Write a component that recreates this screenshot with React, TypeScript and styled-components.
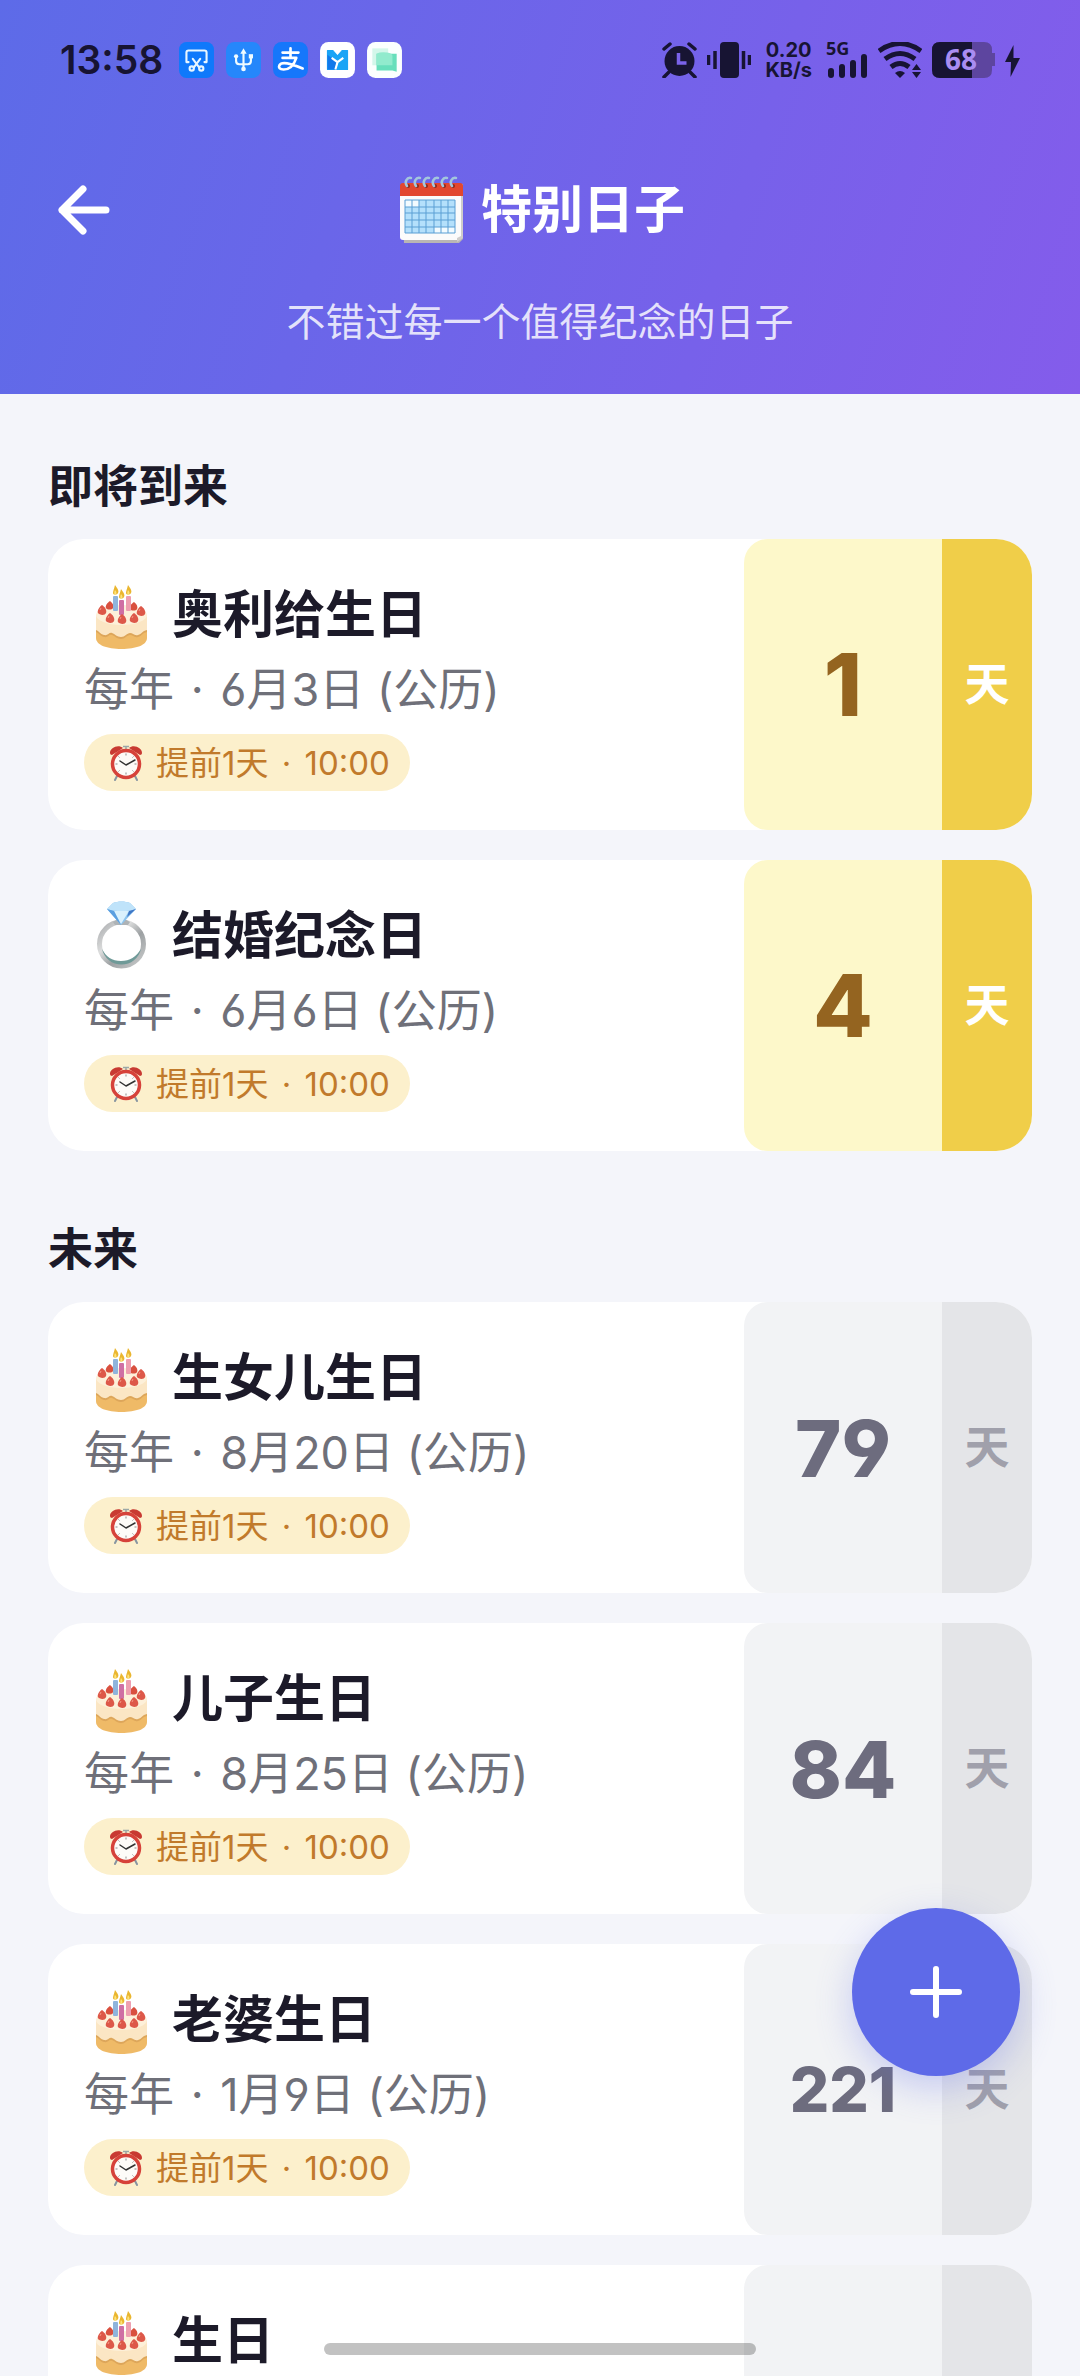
import React from "react";
import styled, { createGlobalStyle } from "styled-components";

const FONT = `Inter, "Noto Sans CJK SC", sans-serif`;
const STATUS_FONT = `"Noto Sans", sans-serif`;
const INK = "#171433";

type Tone = "soon" | "later";

const tones = {
  soon: { cell: "#fdf8ca", unit: "#f0ce49", number: "#946420", label: "#ffffff" },
  later: { cell: "#f2f3f5", unit: "#e4e5e8", number: "#6d6c7e", label: "#a0a0ab" },
};

const GlobalStyle = createGlobalStyle`
  *, *::before, *::after { box-sizing: border-box; }
  body {
    margin: 0;
    background: #f4f5fa;
    font-family: ${FONT};
    font-feature-settings: "cv03", "cv04";
    color: #1c1a29;
  }
  h1, h2, h3, p, ul { margin: 0; padding: 0; }
  ul { list-style: none; }
  button { border: 0; padding: 0; font: inherit; cursor: pointer; }
  svg { display: block; flex: none; }
`;

const Screen = styled.div`
  display: flex;
  flex-direction: column;
  height: 100vh;
  overflow: hidden;
`;

const Header = styled.header`
  flex: none;
  padding-bottom: 50px;
  background: linear-gradient(108deg, #5d6be8 0%, #845ceb 100%);
  color: #fff;
`;

const StatusBar = styled.div`
  display: flex;
  align-items: center;
  justify-content: space-between;
  height: 120px;
  padding: 0 60px;
  color: ${INK};
`;

const StatusGroup = styled.div<{ $gap: number }>`
  display: flex;
  align-items: center;
  gap: ${(p) => p.$gap}px;
`;

const Time = styled.time`
  margin-right: 4px;
  font-size: 39px;
  line-height: 48px;
  font-weight: 600;
`;

const Speed = styled.div`
  display: flex;
  flex-direction: column;
  align-items: center;
  margin: 0 4px;
  font-size: 20px;
  line-height: 20px;
  font-weight: 700;
`;

const NavBar = styled.div`
  display: grid;
  grid-template-columns: 1fr auto 1fr;
  align-items: center;
  height: 180px;
  padding: 0 48px;
`;

const BackButton = styled.button`
  display: grid;
  place-items: center;
  width: 72px;
  height: 72px;
  background: none;
  color: #fff;
`;

const PageTitle = styled.h1`
  display: flex;
  align-items: center;
  gap: 14px;
  font-size: 51px;
  line-height: 76px;
  font-weight: 700;
`;

const Tagline = styled.p`
  font-size: 39px;
  line-height: 44px;
  text-align: center;
  color: rgba(255, 255, 255, 0.82);
`;

const Content = styled.main`
  flex: 1;
  display: flex;
  flex-direction: column;
  gap: 69px;
  min-height: 0;
  overflow-y: auto;
  scrollbar-width: none;
  padding: 63px 48px 0;
`;

const SectionTitle = styled.h2`
  margin-bottom: 22px;
  font-size: 45px;
  line-height: 60px;
  font-weight: 700;
`;

const List = styled.ul`
  display: flex;
  flex-direction: column;
  gap: 30px;
`;

const Card = styled.li`
  display: flex;
  overflow: hidden;
  border-radius: 36px;
  background: #fff;
`;

const CardBody = styled.div`
  flex: 1;
  display: flex;
  flex-direction: column;
  align-items: flex-start;
  min-width: 0;
  padding: 39px 36px;
`;

const CardTitle = styled.h3`
  display: flex;
  align-items: center;
  gap: 16px;
  font-size: 51px;
  line-height: 74px;
  font-weight: 600;
`;

const CardDate = styled.p`
  margin-bottom: 7px;
  font-size: 45px;
  line-height: 75px;
  color: #6f7079;
  white-space: nowrap;
`;

const Dot = styled.span`
  margin: 0 4px;
`;

const Reminder = styled.div`
  display: flex;
  align-items: center;
  gap: 12px;
  height: 57px;
  padding: 0 20px 0 24px;
  border-radius: 29px;
  background: #fcf0cc;
  color: #c17a2b;
  font-size: 33px;
  line-height: 48px;
  white-space: nowrap;
`;

const DaysCell = styled.div<{ $tone: Tone; $digits: number }>`
  display: flex;
  align-items: center;
  justify-content: center;
  width: 198px;
  border-radius: 24px 0 0 24px;
  background: ${(p) => tones[p.$tone].cell};
  color: ${(p) => tones[p.$tone].number};
  font-size: ${(p) => (p.$digits > 2 ? 62 : p.$digits > 1 ? 79 : 87)}px;
  line-height: 96px;
  font-weight: 800;
`;

const UnitCell = styled.div<{ $tone: Tone }>`
  display: flex;
  align-items: center;
  justify-content: center;
  width: 90px;
  background: ${(p) => tones[p.$tone].unit};
  color: ${(p) => tones[p.$tone].label};
  font-size: 45px;
  line-height: 60px;
  font-weight: 700;
`;

const AddButton = styled.button`
  position: fixed;
  right: 60px;
  bottom: 300px;
  display: grid;
  place-items: center;
  width: 168px;
  height: 168px;
  border-radius: 50%;
  background: #5e6ae8;
  color: #fff;
  box-shadow: 0 12px 36px rgba(94, 106, 232, 0.3);
`;

const HomeIndicator = styled.div`
  position: fixed;
  bottom: 21px;
  left: 30%;
  width: 40%;
  height: 12px;
  border-radius: 6px;
  background: rgba(0, 0, 0, 0.24);
`;

function CakeIcon() {
  const berries = [[26, 26], [50, 27], [18, 31], [57, 32], [26, 39], [38, 40], [50, 39]];
  const candles: [number, number, string][] = [[29, 17, "#8fb4dc"], [42, 17, "#ee9fb0"], [35, 21, "#cf6fa4"]];
  return (
    <svg width="72" height="72" viewBox="0 0 72 72" aria-hidden="true">
      <path d="M12 36v23c0 7 11 11 25.500 11S63 66 63 59V36z" fill="#efba67" />
      <path d="M12 36v17c3 1 4 4 8 5s5-3 8-2 5 4 9 4 6-4 9-4 4 3 8 2 4-4 9-5V36z" fill="#dda65a" />
      <path d="M12 36v15c3 1 4 4 8 5s5-3 8-2 5 4 9 4 6-4 9-4 4 3 8 2 4-4 9-5V36z" fill="#fbe6c4" />
      <ellipse cx="37.500" cy="36" rx="25.500" ry="10" fill="#fdf0d9" />
      {berries.slice(0, 2).map(([x, y]) => (
        <path key={x} d={`M${x} ${y - 4}c3 2 4 5 3 7s-6 2-7 0 1-5 4-7z`} fill="#d9503f" />
      ))}
      {candles.map(([x, y, c]) => (
        <g key={x}>
          <rect x={x} y={y} width="5" height="15" rx="1" fill={c} />
          <path d={`M${x + 2} ${y - 11}c3 4 4 6 3 8s-5 2-5 0 1-4 2-8z`} fill="#eab62f" />
          <path d={`M${x + 2} ${y - 6}c2 2 2 4 0 5-1-1-1-3 0-5z`} fill="#fbe27a" />
        </g>
      ))}
      {berries.slice(2).map(([x, y]) => (
        <g key={`${x}-${y}`}>
          <path d={`M${x} ${y - 5}c3 2 5 5 4 8s-7 2-8 0 1-6 4-8z`} fill="#dd5849" />
          <path d={`M${x - 2} ${y}l1-2`} stroke="#f39a86" strokeWidth="1" />
        </g>
      ))}
    </svg>
  );
}

function RingIcon() {
  return (
    <svg width="72" height="72" viewBox="0 0 72 72" aria-hidden="true">
      <defs>
        <linearGradient id="band" x1="0" y1="0" x2="1" y2="1">
          <stop offset="0" stopColor="#a9abad" />
          <stop offset="0.350" stopColor="#dcdddd" />
          <stop offset="0.600" stopColor="#9da1a3" />
          <stop offset="1" stopColor="#c9cbcb" />
        </linearGradient>
      </defs>
      <circle cx="37.500" cy="44" r="22" fill="none" stroke="url(#band)" strokeWidth="5" />
      <path d="M18 49a20 20 0 0 0 39 0c-5 8-11 12-20 12s-15-4-19-12z" fill="#6f9a98" />
      <path d="M29 22l8-5 9 5-2 3H31z" fill="#aeb3b6" />
      <path d="M23 9l6-6c5-2 12-2 17 0l6 6-15 16z" fill="#8cc4ef" />
      <path d="M23 9l6-6c5-2 12-2 17 0l6 6c-8 3-21 3-29 0z" fill="#bfe3fa" />
      <path d="M30 11l7 13 8-13z" fill="#daf1fd" />
      <path d="M23 9l7 2 7 14z" fill="#5b9fe0" />
      <path d="M52 9l-7 2-2 6z" fill="#3f77c6" />
    </svg>
  );
}

function CalendarIcon() {
  const columns = [17, 24, 31, 39, 46, 53];
  const rows = [33, 39, 46, 53];
  return (
    <svg width="72" height="72" viewBox="0 0 72 72" aria-hidden="true">
      <path d="M7 10h61v55l-4 4H9z" fill="#b9b6b4" />
      <path d="M5 20h61v43a3 3 0 0 1-3 3H8a3 3 0 0 1-3-3z" fill="#fbfbfb" />
      <path d="M66 22l2-2v44l-6 4v-4l4-2z" fill="#cfcdcb" />
      <path d="M5 12q0-3 3-3h57q3 0 3 3v10H5z" fill="#e2472f" />
      <path d="M10 26h50v33H10z" fill="#b4e0fb" />
      <path d="M10 26h14v7H10zM39 53h21v6H39z" fill="#f2fbff" />
      <g stroke="#5b9fd4" strokeWidth="1">
        {columns.map((x) => <path key={x} d={`M${x} 26v33`} />)}
        {rows.map((y) => <path key={y} d={`M10 ${y}h50`} />)}
        <path d="M10 26h50v33H10z" fill="none" />
      </g>
      {[12, 21, 30, 39, 48, 57].map((x) => (
        <g key={x}>
          <circle cx={x + 1} cy="12" r="2" fill="#8c2a1e" />
          <path d={`M${x} 12c-3-4 0-9 4-8`} fill="none" stroke="#a3c6dc" strokeWidth="2.500" strokeLinecap="round" />
        </g>
      ))}
    </svg>
  );
}

function ClockIcon() {
  return (
    <svg width="36" height="36" viewBox="0 0 36 36" aria-hidden="true">
      <path d="M9 31l-2 4M27 31l2 4" stroke="#8795a0" strokeWidth="2" strokeLinecap="round" />
      <path d="M18 1v4M15 1.500h6" stroke="#9aa7a6" strokeWidth="1.500" />
      <path d="M2 8c0-5 8-9 13-5L4 10c-1 0-2-1-2-2zM34 8c0-5-8-9-13-5l11 7c1 0 2-1 2-2z" fill="#c83a32" />
      <circle cx="18" cy="19" r="13.500" fill="#fdfbf8" stroke="#d6423a" strokeWidth="3.500" />
      <path d="M18 8.500v2M18 27.500v2M7.500 19h2M26.500 19h2M10.500 11.500l1 1M24.500 25.500l1 1M25.500 11.500l-1 1M11.500 25.500l-1 1" stroke="#8b8b8b" strokeWidth="1" />
      <path d="M12 16l6 4 9-5" fill="none" stroke="#333" strokeWidth="1.500" strokeLinecap="round" strokeLinejoin="round" />
    </svg>
  );
}

function NotificationIcons() {
  return (
    <>
      <svg width="35" height="36" viewBox="0 0 33 34" aria-hidden="true">
        <rect width="33" height="34" rx="7" fill="#0f79fb" />
        <path d="M9 19H7V10q0-2 2-2h15q2 0 2 2v9h-2" fill="none" stroke="#e8f6ff" strokeWidth="2" strokeLinecap="round" strokeLinejoin="round" />
        <path d="M13 16l6 8M20 16l-6 8" stroke="#e8f6ff" strokeWidth="2" strokeLinecap="round" />
        <g fill="none" stroke="#e8f6ff" strokeWidth="2"><circle cx="12" cy="25" r="2" /><circle cx="21" cy="25" r="2" /></g>
      </svg>
      <svg width="35" height="36" viewBox="0 0 33 34" aria-hidden="true">
        <rect width="33" height="34" rx="8" fill="#2587fb" />
        <path d="M16.500 9v17M9.500 14v4q0 3 3 3h8q3 0 3-3v-4" fill="none" stroke="#f0fbff" strokeWidth="2" />
        <path d="M13.500 11l3-5 3 5z" fill="#f0fbff" />
        <circle cx="9.500" cy="13.500" r="2" fill="#f0fbff" /><path d="M21.500 11.500h4v4h-4z" fill="#f0fbff" />
        <circle cx="16.500" cy="25.500" r="2.200" fill="#f0fbff" />
      </svg>
      <svg width="35" height="36" viewBox="0 0 33 34" aria-hidden="true">
        <rect width="33" height="34" rx="8" fill="#1677fb" />
        <path d="M9 10h15M16.500 6v9M9 15h13c-2 6-6 11-12 11-4 0-5-2-4-4 2-4 10-2 22 3" fill="none" stroke="#fff" strokeWidth="2.500" strokeLinecap="round" strokeLinejoin="round" />
      </svg>
      <svg width="35" height="36" viewBox="0 0 33 34" aria-hidden="true">
        <rect width="33" height="34" rx="8" fill="#fff" />
        <path d="M7 8h5l4.500 5L21 8h5v18H7z" fill="#19a4f6" stroke="#19a4f6" strokeWidth="1" strokeLinejoin="round" />
        <path d="M7 12v14h9v-7z" fill="#1278ea" />
        <path d="M11 15l5.500 4 5.500-4M16.500 19l-2 7" fill="none" stroke="#fff" strokeWidth="2" />
      </svg>
      <svg width="35" height="36" viewBox="0 0 33 34" aria-hidden="true">
        <rect width="33" height="34" rx="8" fill="#fbfffe" />
        <path d="M5 6h15v16H5z" fill="#d3f7ea" />
        <path d="M9 11h19v17l-4-1H9z" fill="#67dfbb" />
        <path d="M9 11q4-2 10-1 5 1 5 3v9H9z" fill="#91ebcd" />
      </svg>
    </>
  );
}

function SystemIcons() {
  return (
    <>
      <svg width="35" height="36" viewBox="0 0 35 36" role="img" aria-label="闹钟">
        <circle cx="17.500" cy="19" r="15" fill={INK} />
        <path d="M2 7l6-5M33 7l-6-5M7 30l-5 5M28 30l5 5" stroke={INK} strokeWidth="3.500" strokeLinecap="round" />
        <path d="M16.500 11v10h8" fill="none" stroke="#7a62ea" strokeWidth="3.500" />
      </svg>
      <svg width="44" height="36" viewBox="0 0 44 36" role="img" aria-label="振动">
        <rect x="13" width="19" height="36" rx="4" fill={INK} />
        <path d="M1.500 13v10M8 9v18M36.500 9v18M42.500 13v10" stroke={INK} strokeWidth="3.500" />
      </svg>
      <Speed><span>0.20</span><span>KB/s</span></Speed>
      <svg width="42" height="52" viewBox="0 -8 42 52" role="img" aria-label="5G">
        <text x="0" y="13" fontFamily={STATUS_FONT} fontSize="18" fontWeight="700" fill={INK}>5G</text>
        <rect x="2" y="26" width="6" height="10" rx="3" fill={INK} />
        <rect x="13" y="22" width="6" height="14" rx="3" fill={INK} />
        <rect x="24" y="18" width="6" height="18" rx="3" fill={INK} />
        <rect x="35" y="12" width="6" height="24" rx="3" fill={INK} />
      </svg>
      <svg width="44" height="36" viewBox="0 0 44 36" role="img" aria-label="Wi-Fi">
        <g fill="none" stroke={INK} strokeWidth="5">
          <path d="M1 9q21-15 42 0" />
          <path d="M7 17q15-11 30 0" />
          <path d="M13 25q9-7 18 0" />
        </g>
        <path d="M17 31q5-4 10 0l-5 5z" fill={INK} />
        <path d="M34 28l4.500-6 4.500 6zM34 30l4.500 6 4.500-6z" fill={INK} />
      </svg>
      <svg width="63" height="52" viewBox="0 -8 63 52" role="img" aria-label="68%">
        <path d="M8 0h44q8 0 8 8v3h3v13h-3v4q0 8-8 8H8q-8 0-8-8V8q0-8 8-8z" fill="#5d459f" />
        <path d="M8 0h32v36H8q-8 0-8-8V8q0-8 8-8z" fill={INK} />
        <text x="29" y="28" textAnchor="middle" fontFamily={STATUS_FONT} fontSize="28" fontWeight="700" fill="#a98df2">68</text>
      </svg>
      <svg width="15" height="36" viewBox="0 0 15 36" role="img" aria-label="充电中">
        <path d="M8.500 3L0 20h6l-.500 15L15 16H8.500z" fill={INK} />
      </svg>
    </>
  );
}

type Day = { icon: "cake" | "ring"; name: string; date: string; days: number };

const soon: Day[] = [
  { icon: "cake", name: "奥利给生日", date: "6月3日", days: 1 },
  { icon: "ring", name: "结婚纪念日", date: "6月6日", days: 4 },
];

const later: Day[] = [
  { icon: "cake", name: "生女儿生日", date: "8月20日", days: 79 },
  { icon: "cake", name: "儿子生日", date: "8月25日", days: 84 },
  { icon: "cake", name: "老婆生日", date: "1月9日", days: 221 },
  { icon: "cake", name: "生日", date: "", days: 0 },
];

function DayCard({ day, tone }: { day: Day; tone: Tone }) {
  const hasDays = day.days > 0;
  return (
    <Card>
      <CardBody>
        <CardTitle>
          {day.icon === "cake" ? <CakeIcon /> : <RingIcon />}
          {day.name}
        </CardTitle>
        {day.date && (
          <>
            <CardDate>每年 <Dot>·</Dot> {day.date} (公历)</CardDate>
            <Reminder>
              <ClockIcon />
              <span>提前1天 <Dot>·</Dot> 10:00</span>
            </Reminder>
          </>
        )}
      </CardBody>
      <DaysCell $tone={tone} $digits={String(day.days).length}>{hasDays && day.days}</DaysCell>
      <UnitCell $tone={tone}>{hasDays && "天"}</UnitCell>
    </Card>
  );
}

function DaySection({ title, days, tone }: { title: string; days: Day[]; tone: Tone }) {
  return (
    <section>
      <SectionTitle>{title}</SectionTitle>
      <List>
        {days.map((day) => <DayCard key={day.name} day={day} tone={tone} />)}
      </List>
    </section>
  );
}

export default function App() {
  return (
    <Screen>
      <GlobalStyle />
      <Header>
        <StatusBar>
          <StatusGroup $gap={12}>
            <Time>13:58</Time>
            <NotificationIcons />
          </StatusGroup>
          <StatusGroup $gap={10}>
            <SystemIcons />
          </StatusGroup>
        </StatusBar>
        <NavBar>
          <BackButton type="button" aria-label="返回">
            <svg width="52" height="50" viewBox="0 0 52 50" fill="none" stroke="currentColor" strokeWidth="7" strokeLinecap="round" strokeLinejoin="round" aria-hidden="true">
              <path d="M48 25H4M25 4L4 25l21 21" />
            </svg>
          </BackButton>
          <PageTitle>
            <CalendarIcon />
            特别日子
          </PageTitle>
        </NavBar>
        <Tagline>不错过每一个值得纪念的日子</Tagline>
      </Header>
      <Content>
        <DaySection title="即将到来" days={soon} tone="soon" />
        <DaySection title="未来" days={later} tone="later" />
      </Content>
      <AddButton type="button" aria-label="添加">
        <svg width="54" height="54" viewBox="0 0 54 54" stroke="currentColor" strokeWidth="6" strokeLinecap="round" aria-hidden="true">
          <path d="M27 4v46M4 27h46" />
        </svg>
      </AddButton>
      <HomeIndicator />
    </Screen>
  );
}
